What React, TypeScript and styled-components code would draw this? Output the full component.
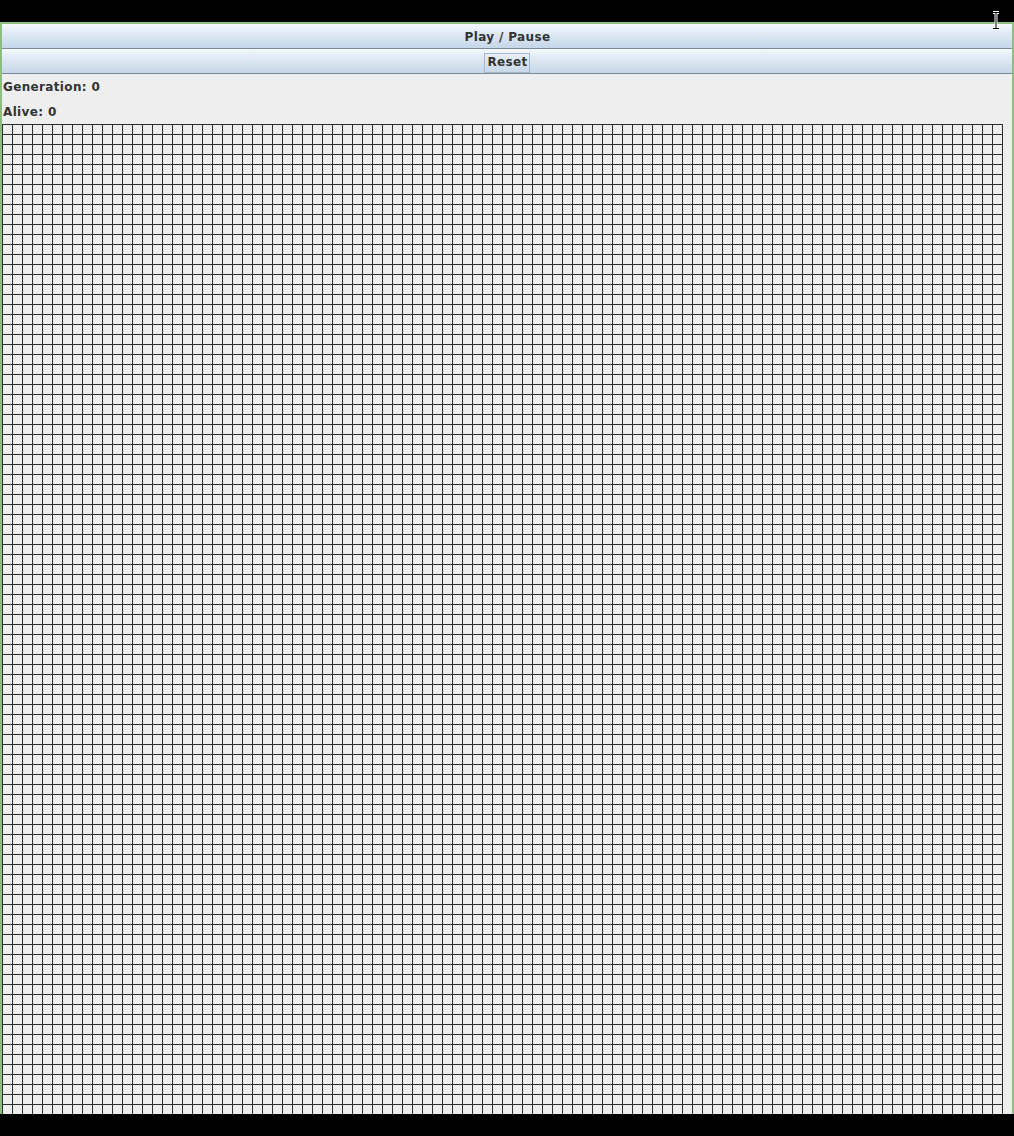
import React from "react";
import styled, { createGlobalStyle } from "styled-components";

const Global = createGlobalStyle`
  html, body { margin: 0; padding: 0; background: #000; }
  body { font-family: "DejaVu Sans", "Liberation Sans", sans-serif; }
`;

const Screen = styled.div`
  position: relative;
  width: 1014px;
  height: 1136px;
  display: flex;
  flex-direction: column;
  background: #000;
  overflow: hidden;
`;

const TopBar = styled.div`
  height: 22px;
  flex: none;
  background: #000;
`;

const BottomBar = styled.div`
  height: 22px;
  flex: none;
  background: #000;
`;

const Frame = styled.div`
  height: 1092px;
  flex: none;
  box-sizing: border-box;
  border: 2px solid #8dbd80;
  border-bottom: none;
  background: #eeeeee;
  display: flex;
  flex-direction: column;
  overflow: hidden;
`;

const Button = styled.button`
  height: 25px;
  flex: none;
  width: 100%;
  margin: 0;
  padding: 3px 0 0;
  border: none;
  border-bottom: 1px solid #7a8a99;
  background: linear-gradient(to bottom, #f4f8fc 0%, #e6eef7 25%, #d6e3f0 60%, #c4d6e9 100%);
  font-family: "DejaVu Sans", sans-serif;
  font-weight: bold;
  font-size: 12px;
  letter-spacing: 0.35px;
  color: #333333;
  display: flex;
  align-items: center;
  justify-content: center;
  box-sizing: border-box;
`;

const ButtonText = styled.span<{ $focused?: boolean }>`
  padding: 1px 1px 2px 2px;
  border: 1px solid ${(p) => (p.$focused ? "#a3b8cc" : "transparent")};
  line-height: 15px;
`;

const Label = styled.div`
  height: 25px;
  flex: none;
  padding-left: 1px;
  display: flex;
  align-items: center;
  font-family: "DejaVu Sans", sans-serif;
  font-weight: bold;
  font-size: 12px;
  letter-spacing: 0.35px;
  color: #333333;
`;

const Grid = styled.div`
  width: 1001px;
  height: 1001px;
  flex: none;
  background-color: #eeeeee;
  background-image:
    linear-gradient(to right, #2e2e2e 1px, transparent 1px),
    linear-gradient(to bottom, #2e2e2e 1px, transparent 1px);
  background-size: 10px 10px;
`;

const Cursor = styled.svg`
  position: absolute;
  left: 992px;
  top: 11px;
  width: 8px;
  height: 19px;
`;

export default function App() {
  return (
    <>
      <Global />
      <Screen>
        <TopBar />
        <Frame>
          <Button>
            <ButtonText>Play / Pause</ButtonText>
          </Button>
          <Button>
            <ButtonText $focused>Reset</ButtonText>
          </Button>
          <Label>Generation: 0</Label>
          <Label>Alive: 0</Label>
          <Grid />
        </Frame>
        <BottomBar />
        <Cursor viewBox="0 0 8 19">
          <path d="M1 1.5h6M4 1.5v16M1 17.5h6" stroke="#fff" strokeWidth="3" fill="none" />
          <path d="M1 1.5h6M4 1.5v16M1 17.5h6" stroke="#000" strokeWidth="1" fill="none" />
        </Cursor>
      </Screen>
    </>
  );
}
